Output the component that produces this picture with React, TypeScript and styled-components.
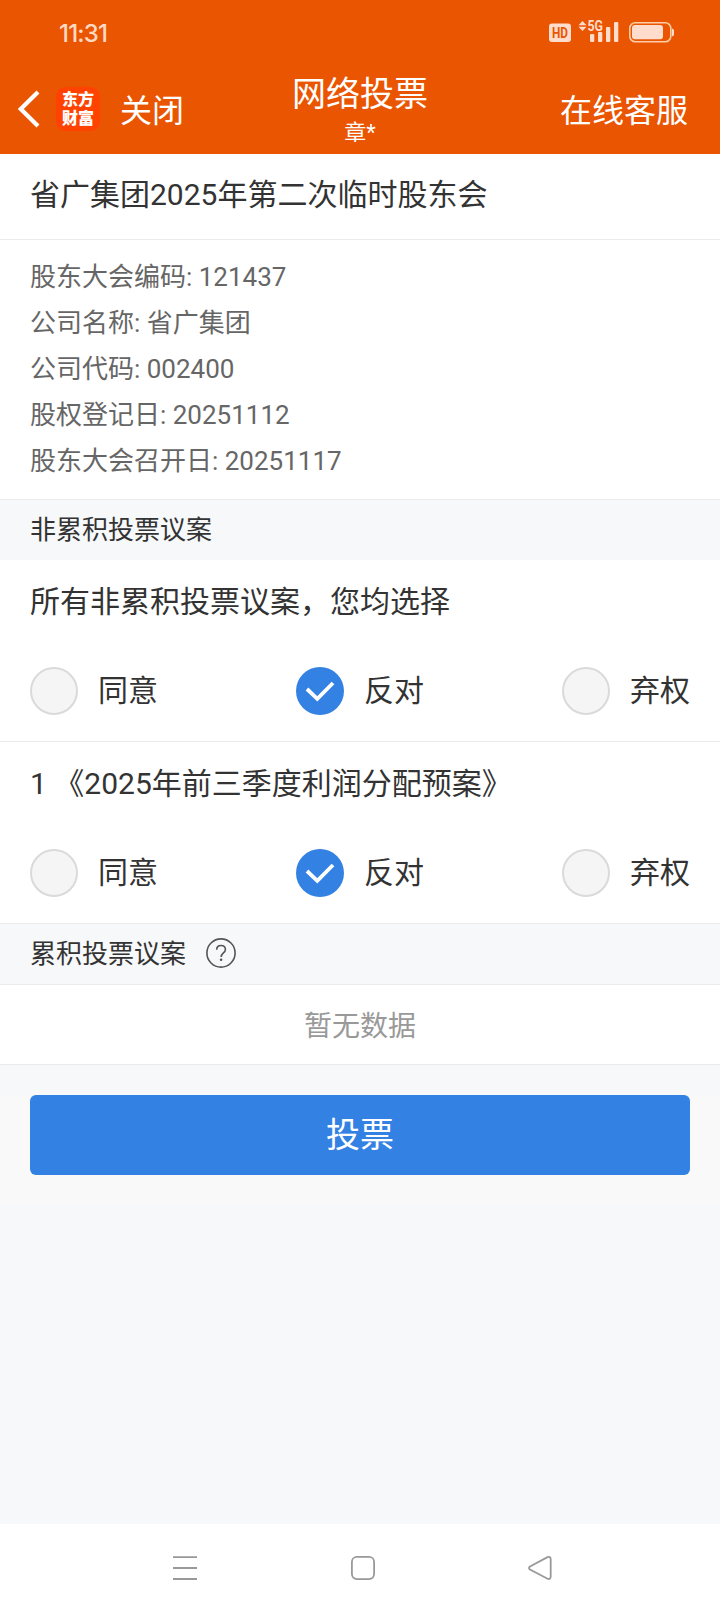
import React, { useState } from 'react';
import styled, { createGlobalStyle } from 'styled-components';

const GlobalStyle = createGlobalStyle`
  * { box-sizing: border-box; }
  body {
    margin: 0;
    background: #f7f8fa;
    color: #333;
    font-family: Roboto, "Noto Sans CJK SC", sans-serif;
  }
`;

const Screen = styled.div`
  width: 720px;
  height: 1612px;
  display: flex;
  flex-direction: column;
  overflow: hidden;
`;

const TopArea = styled.header`
  height: 154px;
  flex: none;
  background: #ea5502;
  color: #fff;
`;

const StatusBar = styled.div`
  height: 64px;
  padding: 0 45px 0 59px;
  display: flex;
  align-items: center;
  justify-content: space-between;
`;

const Clock = styled.span`
  font: 500 24px/30px Inter, sans-serif;
  letter-spacing: -0.8px;
  color: #ffd9c2;
  padding-top: 3px;
`;

const TitleBar = styled.div`
  height: 90px;
  display: grid;
  grid-template-columns: 1fr auto 1fr;
  align-items: center;
  padding: 0 32px;
`;

const LeftTools = styled.div`
  display: flex;
  align-items: center;
  margin-left: -14px;
`;

const BackIcon = styled.svg`
  width: 22px;
  height: 38px;
  margin-right: 16px;
`;

const Logo = styled.div`
  width: 44px;
  height: 44px;
  margin-right: 20px;
  border-radius: 9px;
  background: #ff4200;
  display: flex;
  flex-direction: column;
  align-items: center;
  justify-content: center;
  font-size: 16px;
  font-weight: 900;
  line-height: 19px;
`;

const NavAction = styled.span<{ $end?: boolean }>`
  font-size: 32px;
  line-height: 40px;
  padding-top: 3px;
  justify-self: ${p => (p.$end ? 'end' : 'start')};
`;

const TitleBlock = styled.div`
  text-align: center;
  padding-top: 3px;
`;

const Title = styled.h1`
  margin: 0;
  font-size: 34px;
  font-weight: 400;
  line-height: 44px;
`;

const Subtitle = styled.div`
  font-size: 22px;
  line-height: 34px;
`;

const MeetingTitle = styled.h2`
  margin: 0;
  height: 86px;
  padding: 0 30px 9px;
  display: flex;
  align-items: center;
  flex: none;
  font-size: 30px;
  font-weight: 400;
  background: #fff;
  border-bottom: 1px solid #ebebeb;
`;

const InfoList = styled.div`
  height: 259px;
  flex: none;
  padding: 14px 30px 15px;
  background: #fff;
  color: #666;
  font-size: 26px;
  line-height: 46px;
`;

const SectionBar = styled.div<{ $closed?: boolean }>`
  height: ${p => (p.$closed ? 62 : 61)}px;
  flex: none;
  padding: 0 30px;
  display: flex;
  align-items: center;
  gap: 20px;
  font-size: 26px;
  background: #f7f8fa;
  border-top: 1px solid #ebebeb;
  border-bottom: ${p => (p.$closed ? '1px solid #ebebeb' : 'none')};
`;

const SectionName = styled.span`
  padding-bottom: 6px;
`;

const HelpIcon = styled.svg`
  width: 30px;
  height: 30px;
  margin-bottom: 2px;
`;

const Proposal = styled.section<{ $divided?: boolean }>`
  height: ${p => (p.$divided ? 182 : 181)}px;
  flex: none;
  padding: 20px 30px 26px;
  display: flex;
  flex-direction: column;
  justify-content: space-between;
  background: #fff;
  border-top: ${p => (p.$divided ? '1px solid #ebebeb' : 'none')};
`;

const ProposalTitle = styled.div`
  font-size: 30px;
  line-height: 44px;
  white-space: pre;
`;

const Options = styled.div`
  display: flex;
  justify-content: space-between;
`;

const Option = styled.button`
  display: flex;
  align-items: center;
  gap: 20px;
  padding: 0;
  border: 0;
  background: none;
  color: inherit;
  font: inherit;
  font-size: 30px;
  line-height: 46px;
`;

const Radio = styled.span<{ $checked: boolean }>`
  width: 48px;
  height: 48px;
  border-radius: 50%;
  border: ${p => (p.$checked ? 'none' : '2px solid #dadada')};
  background: ${p => (p.$checked ? '#3381e3' : '#f5f5f5')};
`;

const Empty = styled.div`
  height: 79px;
  flex: none;
  padding-bottom: 2px;
  display: flex;
  align-items: center;
  justify-content: center;
  font-size: 28px;
  color: #999;
  background: #fff;
`;

const SubmitArea = styled.div`
  flex: none;
  padding-top: 30px;
  border-top: 1px solid #ebebeb;
`;

const SubmitBand = styled.div`
  padding: 0 30px 30px;
  background: #f9f9f9;
`;

const Submit = styled.button`
  display: block;
  width: 100%;
  height: 80px;
  padding: 0 0 6px;
  border: 0;
  border-radius: 6px;
  background: #3381e3;
  color: #fff;
  font: inherit;
  font-size: 34px;
`;

const Filler = styled.div`
  flex: 1;
`;

const SystemNav = styled.nav`
  height: 88px;
  flex: none;
  padding: 0 167px 0 172px;
  display: flex;
  align-items: center;
  justify-content: space-between;
  background: #fff;
`;

const NavIcon = styled.svg`
  width: 26px;
  height: 26px;
  fill: none;
  stroke: #999;
  stroke-width: 1.8;
`;

const info = [
  '股东大会编码: 121437',
  '公司名称: 省广集团',
  '公司代码: 002400',
  '股权登记日: 20251112',
  '股东大会召开日: 20251117',
];

const choices = ['同意', '反对', '弃权'];

function StatusIcons() {
  return (
    <svg width="126" height="44" viewBox="549 10 126 44" fill="#ffdccb">
      <rect x="549" y="23.5" width="22" height="18.5" rx="3" />
      <text x="560" y="38" textAnchor="middle" textLength="16" lengthAdjust="spacingAndGlyphs" fontFamily="Roboto" fontSize="14.5" fontWeight="700" fill="#ea5502">HD</text>
      <path d="M582.5 21l4 4.2h-8zM582.5 31l4-4.2h-8z" />
      <text x="587.5" y="31" textLength="15.5" lengthAdjust="spacingAndGlyphs" fontFamily="Roboto" fontSize="14" fontWeight="700">5G</text>
      <rect x="590" y="34" width="4.3" height="8" rx="1" />
      <rect x="598" y="32" width="4.3" height="10" rx="1" />
      <rect x="606" y="27" width="4.3" height="15" rx="1" />
      <rect x="614" y="22" width="4.3" height="20" rx="1" />
      <rect x="629.8" y="22.8" width="41" height="19" rx="5.5" fill="none" stroke="#ffcda6" strokeWidth="1.6" />
      <rect x="632" y="25" width="31" height="14.3" rx="3" />
      <path d="M672 28.5q2 .5 2 2v4q0 1.500-2 2z" />
    </svg>
  );
}

function Ballot({ title, divided }: { title: string; divided?: boolean }) {
  const [choice, setChoice] = useState('反对');
  return (
    <Proposal $divided={divided}>
      <ProposalTitle>{title}</ProposalTitle>
      <Options>
        {choices.map(name => (
          <Option key={name} onClick={() => setChoice(name)}>
            <Radio $checked={choice === name}>
              {choice === name && (
                <svg width="48" height="48" viewBox="0 0 48 48" fill="none" stroke="#fff" strokeWidth="3.8" display="block">
                  <path d="M11 22l10.300 9.800L37 16" />
                </svg>
              )}
            </Radio>
            <span>{name}</span>
          </Option>
        ))}
      </Options>
    </Proposal>
  );
}

export default function App() {
  return (
    <Screen>
      <GlobalStyle />
      <TopArea>
        <StatusBar>
          <Clock>11:31</Clock>
          <StatusIcons />
        </StatusBar>
        <TitleBar>
          <LeftTools>
            <BackIcon viewBox="0 0 22 38" fill="none" stroke="#fff" strokeWidth="4.2">
              <path d="M20 2L2.800 19L20 36" />
            </BackIcon>
            <Logo>
              <span>东方</span>
              <span>财富</span>
            </Logo>
            <NavAction>关闭</NavAction>
          </LeftTools>
          <TitleBlock>
            <Title>网络投票</Title>
            <Subtitle>章*</Subtitle>
          </TitleBlock>
          <NavAction $end>在线客服</NavAction>
        </TitleBar>
      </TopArea>

      <MeetingTitle>省广集团2025年第二次临时股东会</MeetingTitle>
      <InfoList>
        {info.map(line => (
          <div key={line}>{line}</div>
        ))}
      </InfoList>

      <SectionBar>
        <SectionName>非累积投票议案</SectionName>
      </SectionBar>
      <Ballot title="所有非累积投票议案，您均选择" />
      <Ballot title="1 《2025年前三季度利润分配预案》" divided />

      <SectionBar $closed>
        <SectionName>累积投票议案</SectionName>
        <HelpIcon viewBox="0 0 30 30" fill="none" stroke="#555" strokeWidth="1.6">
          <circle cx="15" cy="15" r="14.100" />
          <path d="M10.700 11.800c0-2.700 1.800-4.300 4.300-4.300s4.400 1.600 4.400 3.900c0 3.500-4.200 3.600-4.200 7.600" />
          <circle cx="15.100" cy="21.700" r="1.300" fill="#555" stroke="none" />
        </HelpIcon>
      </SectionBar>
      <Empty>暂无数据</Empty>

      <SubmitArea>
        <SubmitBand>
          <Submit>投票</Submit>
        </SubmitBand>
      </SubmitArea>

      <Filler />
      <SystemNav>
        <NavIcon viewBox="0 0 26 26">
          <path d="M1 2.200h24M1 13h24M1 24h24" />
        </NavIcon>
        <NavIcon viewBox="0 0 26 26">
          <rect x="1.900" y="1.900" width="22.200" height="22.200" rx="5" />
        </NavIcon>
        <NavIcon viewBox="0 0 26 26">
          <path d="M3 11.500L20.500 2.100Q23.500 1 23.700 4V21.500Q23.500 25 20.500 23.700L3 14.500Q1 13 3 11.500Z" />
        </NavIcon>
      </SystemNav>
    </Screen>
  );
}
